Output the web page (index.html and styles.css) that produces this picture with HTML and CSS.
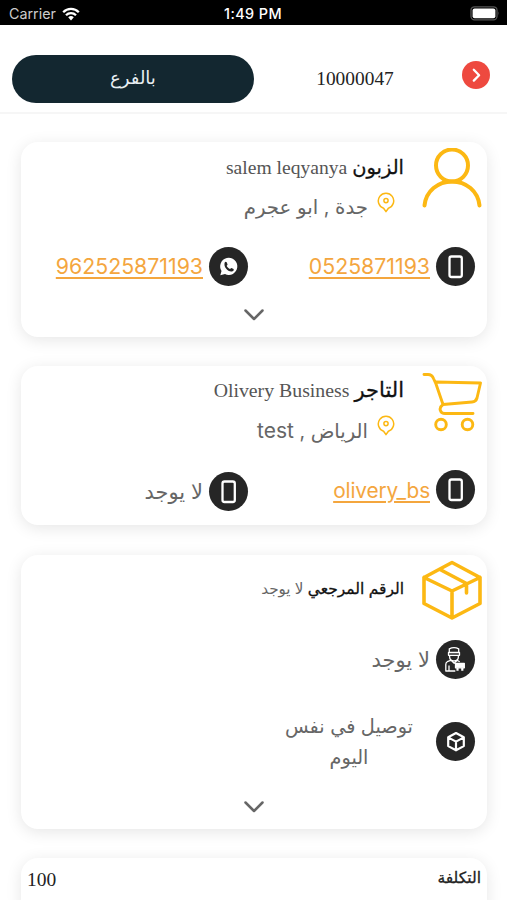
FILE: index.html
```html
<!DOCTYPE html>
<html lang="ar" dir="rtl">
<head>
<meta charset="utf-8">
<title>10000047</title>
<link rel="stylesheet" href="styles.css">
</head>
<body>
<svg class="defs" width="0" height="0">
  <symbol id="phone" viewBox="0 0 39 39"><rect x="13.500" y="9.500" width="12.300" height="20.500" rx="2" fill="none" stroke="#fff" stroke-width="2.300"/></symbol>
  <symbol id="pin" viewBox="0 0 18 22"><path d="M9 19.600 6.600 16.200A7.700 7.700 0 1 1 11.400 16.200Z" fill="none" stroke="#fcb813" stroke-width="1.500" stroke-linejoin="round"/><circle cx="9" cy="8.600" r="2.100" fill="none" stroke="#fcb813" stroke-width="1.500"/></symbol>
  <symbol id="chevron" viewBox="0 0 22 14"><path d="M2.500 2.500 11 11l8.500-8.500" fill="none" stroke="#666" stroke-width="2.500" stroke-linecap="round" stroke-linejoin="round"/></symbol>
</svg>
<div class="status" dir="ltr">
  <div class="carrier"><span>Carrier</span>
    <svg width="18" height="14" viewBox="0 0 18 14"><path d="M1.200 5.200a11 11 0 0 1 15.600 0M4 8.200a7 7 0 0 1 10 0" fill="none" stroke="#fff" stroke-width="2.300"/><path d="M6.200 10.300a4 4 0 0 1 5.600 0L9 13.400Z" fill="#fff"/></svg>
  </div>
  <div class="time">1:49 PM</div>
  <svg class="battery" width="30" height="15" viewBox="0 0 30 15"><rect x="1" y=".8" width="26" height="13" rx="3.500" fill="none" stroke="#555" stroke-width="1.300"/><rect x="2.600" y="2.400" width="22.800" height="9.800" rx="2" fill="#fff"/><path d="M28.300 5.200q1.500 2.100 0 4.400Z" fill="#555"/></svg>
</div>
<header class="top" dir="ltr">
  <div class="pill" dir="rtl">بالفرع</div>
  <div class="order">10000047</div>
  <svg class="go" width="28" height="28" viewBox="0 0 28 28"><circle cx="14" cy="14" r="14" fill="#ee493f"/><path d="m11.800 8.800 5.300 5.400-5.300 5.400" fill="none" stroke="#fff" stroke-width="2.300" stroke-linecap="round" stroke-linejoin="round"/></svg>
</header>
<main>
  <section class="card customer">
    <div class="head">
      <svg class="big" viewBox="0 0 60 60" fill="none" stroke="#fcb813" stroke-width="4" stroke-linecap="round"><circle cx="30" cy="17.500" r="16"/><path d="M2.500 57.500C4 43 16 33.500 30 33.500S56 43 57.500 57.500"/></svg>
      <div class="info">
        <div class="title"><b>الزبون</b> <span class="name">salem leqyanya</span></div>
        <div class="place"><svg width="18" height="22"><use href="#pin"/></svg><span>جدة , ابو عجرم</span></div>
      </div>
    </div>
    <div class="contacts">
      <div class="contact"><svg class="disc"><use href="#phone"/></svg><a>0525871193</a></div>
      <div class="contact"><svg class="disc" viewBox="0 0 39 39"><path d="M11.300 28.200 12.500 24A8.600 8.600 0 1 1 16 27.100Z" fill="#fff"/><path d="M15.700 15.500c.8-1 1.700-.9 2.100.1l.7 1.700c.2.600-.7 1.200-.8 1.700.8 1.500 1.900 2.400 3.300 3 .5-.2 1-1.300 1.500-1.100l2 1c.6.400.1 2-1 2.400-3.800 1.400-9.400-4-7.800-8.800Z" fill="#262626"/></svg><a>962525871193</a></div>
    </div>
    <svg class="chev" width="22" height="14"><use href="#chevron"/></svg>
  </section>
  <section class="card merchant">
    <div class="head">
      <svg class="big" viewBox="0 0 60 60" fill="none" stroke="#fcb813" stroke-width="2.900" stroke-linecap="round" stroke-linejoin="round"><path d="M2 2.500h4q4 0 5.500 4l2.500 5.500 7 20.500 29-2.500q4-.4 5-4l3.500-15-44.500-1M21 32.500q-4 3-2.500 6.200 1 2.800 4.500 2.800h28"/><circle cx="19" cy="52.500" r="5.300"/><circle cx="45.500" cy="52.500" r="5.300"/></svg>
      <div class="info">
        <div class="title"><b class="wide">التاجر</b> <span class="name">Olivery Business</span></div>
        <div class="place city"><svg width="18" height="22"><use href="#pin"/></svg><span>الرياض , <i>test</i></span></div>
      </div>
    </div>
    <div class="contacts">
      <div class="contact"><svg class="disc"><use href="#phone"/></svg><a class="user">olivery_bs</a></div>
      <div class="contact lower"><svg class="disc"><use href="#phone"/></svg><span class="none">لا يوجد</span></div>
    </div>
  </section>
  <section class="card parcel">
    <div class="head">
      <svg class="big" viewBox="0 0 60 60" fill="none" stroke="#fcb813" stroke-width="3.600" stroke-linejoin="round" stroke-linecap="round"><path d="M30 2.500 58 17.500v26L30 58 2 43.500v-26ZM2 17.500 30 31l28-13.500M30 31v27M18 9.500l26.500 14V33"/></svg>
      <div class="info"><div class="title ref"><b>الرقم المرجعي</b> <span>لا يوجد</span></div></div>
    </div>
    <div class="contact driver"><svg class="disc" viewBox="0 0 39 39" fill="none" stroke="#fff" stroke-width="1.300" stroke-linejoin="round"><path d="M13.300 8.800q4.700-2.400 9.400 0v3.700h-9.400ZM12.500 12.500h11v2.800h-11ZM13.600 15.300v1.500c0 5.500 8.800 5.500 8.800 0v-1.500M15.300 20.200l-4 1.500q-1.500.8-1.500 2.800V31h9.500M15.300 20.500l2.900 2.700 3-3 2.500 1.500M13 25.500V31"/><path d="M19.500 23.300h8.800v4.500h-8.800Z" fill="#fff"/><path d="M21.500 28v2.700m4.800-2.700v2.700" stroke-width="2.200"/></svg><span class="none">لا يوجد</span></div>
    <div class="contact service"><svg class="disc" viewBox="0 0 39 39"><path d="m20 11 7.800 4.300v8.800L20 28.300l-7.800-4.200v-8.800Zm-7.400 4.600 7.400 4 7.400-4M20 19.600v8.500" fill="none" stroke="#fff" stroke-width="2.200" stroke-linejoin="round"/></svg><div class="service-text">توصيل في نفس<br>اليوم</div></div>
    <svg class="chev" width="22" height="14"><use href="#chevron"/></svg>
  </section>
  <section class="card cost"><b>التكلفة</b><span>100</span></section>
</main>
</body>
</html>
```

FILE: styles.css
```css
* { box-sizing: border-box; }
body { margin: 0; height: 900px; overflow: hidden; background: #fff; color: #666; font-family: Inter, "DejaVu Sans", sans-serif; }
svg { display: block; flex: none; }
.defs { position: absolute; }
.status { height: 25px; background: #000; color: #fff; display: grid; grid-template-columns: 1fr auto 1fr; align-items: center; padding: 2px 7px 0 6px; font: 14.300px Inter, sans-serif; }
.carrier { display: flex; align-items: center; gap: 6px; color: #ccc; padding-left: 3px; }
.time { font-weight: 500; font-size: 14.400px; letter-spacing: .4px; }
.battery { justify-self: end; }
.top { height: 89px; padding: 30px 17px 0 12px; border-bottom: 2px solid #f6f6f6; display: flex; align-items: flex-start; }
.pill { width: 242px; height: 48px; border-radius: 24px; background: #132730; color: #e8eef2; font-size: 18px; line-height: 45px; text-align: center; }
.order { width: 202px; text-align: center; font: 19.400px/48px "Liberation Serif", serif; color: #222; }
.go { margin: 6px 0 0 6px; }
main { padding: 28px 20px 0 21px; }
.card { background: #fff; border-radius: 17px; box-shadow: 0 3px 16px rgba(0,0,0,.1); padding: 6px 5px 0 0; }
.customer { height: 195px; margin-bottom: 29px; }
.merchant { height: 159px; margin-bottom: 30px; }
.parcel { height: 274px; margin-bottom: 29px; padding-top: 5px; }
.head { display: flex; gap: 18px; height: 79px; }
.big { width: 60px; height: 60px; }
.title { height: 39px; line-height: 38px; white-space: nowrap; font-size: 18px; }
.title b { color: #111; font-weight: 400; -webkit-text-stroke: .3px #111; font-size: 19.400px; }
.title .wide { font-size: 21px; }
.name { font-family: "Liberation Serif", serif; font-size: 19.600px; color: #555; }
.merchant .name { font-size: 19.800px; }
.place { display: flex; gap: 9px; height: 36px; padding-right: 9px; font-size: 19.800px; line-height: 41px; white-space: nowrap; }
.place svg { margin-top: 5px; }
.city { font-size: 19.600px; line-height: 39px; }
.city svg { margin-top: 4px; }
.place i { font-style: normal; font-size: 21px; }
.contacts { display: grid; grid-template-columns: 227px 227px; padding-right: 7px; margin-top: 20px; }
.merchant .title, .merchant .contacts { position: relative; top: -1px; }
.contact { display: flex; align-items: center; gap: 6px; height: 39px; }
.disc { width: 39px; height: 39px; border-radius: 50%; background: #262626; }
a { color: #f4a63e; font-size: 21.300px; line-height: 26px; padding-bottom: 1px; text-decoration: underline; text-decoration-thickness: 1.500px; text-underline-offset: 3px; }
.user { font-size: 20.800px; letter-spacing: -.12px; padding: 2px 0 0; }
.lower { padding-top: 4px; }
.none { font-size: 21px; }
.chev { margin: 22px 217px 0 auto; }
.ref { line-height: 57px; font-size: 15.200px; }
.title.ref b { font-size: 15.500px; }
.driver { margin: 1px 7px 0 0; }
.service { height: 66px; margin: 29px 7px 0 0; }
.service-text { font-size: 19.300px; line-height: 31px; text-align: center; width: 128px; margin-right: 17px; padding-top: 2px; white-space: nowrap; }
.parcel .chev { margin-top: 26px; }
.cost { height: 60px; display: flex; justify-content: space-between; padding: 10px 6px 0 6px; color: #222; }
.cost b { font-size: 15.500px; font-weight: 400; line-height: 19px; -webkit-text-stroke: .3px #222; }
.cost span { font: 19.500px/23px "Liberation Serif", serif; }
```
